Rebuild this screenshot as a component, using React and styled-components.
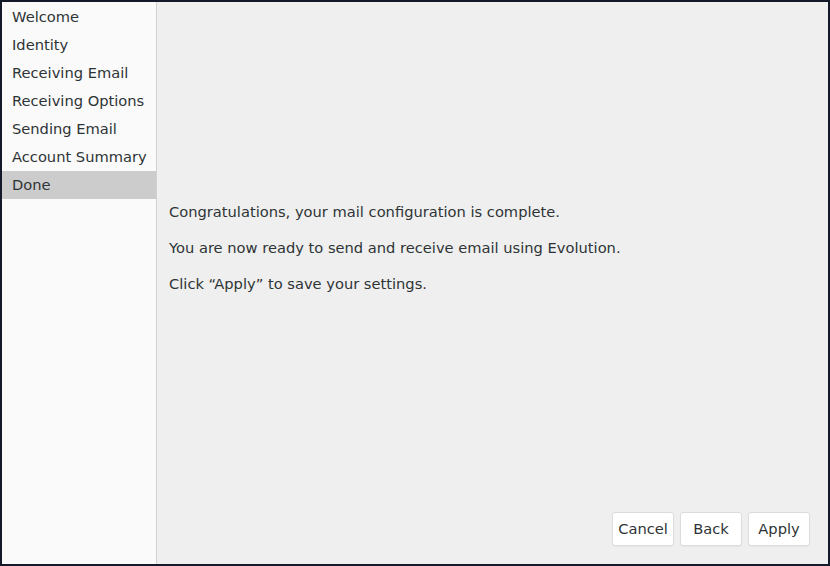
import React from 'react';
import styled, { createGlobalStyle } from 'styled-components';

const GlobalStyle = createGlobalStyle`
  html, body {
    margin: 0;
    padding: 0;
    background: #141a2a;
  }
  body {
    font-family: 'DejaVu Sans', 'Noto Sans', sans-serif;
    font-size: 14.67px;
    color: #2e3436;
  }
`;

const steps = [
  'Welcome',
  'Identity',
  'Receiving Email',
  'Receiving Options',
  'Sending Email',
  'Account Summary',
  'Done'
];

const Window = styled.div`
  box-sizing: border-box;
  width: 830px;
  height: 566px;
  border: 2px solid #141a2a;
  display: flex;
  background: #efefef;
`;

const Sidebar = styled.div`
  width: 154px;
  background: #fafafa;
  border-right: 1px solid #d2d2d2;
  padding-top: 1px;
  display: flex;
  flex-direction: column;
`;

const Step = styled.div`
  height: 28px;
  line-height: 28px;
  padding-left: 10px;
  white-space: nowrap;
  background: ${(p) => (p.$active ? '#cccccc' : 'transparent')};
  color: #2e3436;
`;

const Main = styled.div`
  flex: 1;
  display: flex;
  flex-direction: column;
`;

const Body = styled.div`
  flex: 1;
  display: flex;
  flex-direction: column;
  justify-content: center;
  padding: 0 12px;
  gap: 17px;
  padding-bottom: 20px;
`;

const Line = styled.p`
  margin: 0;
  line-height: 19px;
`;

const Actions = styled.div`
  display: flex;
  justify-content: flex-end;
  gap: 6px;
  padding: 0 18px 18px 0;
`;

const Button = styled.button`
  font-family: inherit;
  font-size: 14.67px;
  line-height: 30px;
  color: #2e3436;
  background: #ffffff;
  border: 1px solid #dcdcdc;
  border-radius: 3px;
  width: 62px;
  height: 34px;
  padding: 0;
  box-shadow: 0 1px 1px rgba(0, 0, 0, 0.04);
`;

export default function App() {
  return (
    <>
      <GlobalStyle />
      <Window>
        <Sidebar>
          {steps.map((s) => (
            <Step key={s} $active={s === 'Done'}>
              {s}
            </Step>
          ))}
        </Sidebar>
        <Main>
          <Body>
            <Line>Congratulations, your mail configuration is complete.</Line>
            <Line>You are now ready to send and receive email using Evolution.</Line>
            <Line>Click “Apply” to save your settings.</Line>
          </Body>
          <Actions>
            <Button>Cancel</Button>
            <Button>Back</Button>
            <Button>Apply</Button>
          </Actions>
        </Main>
      </Window>
    </>
  );
}
